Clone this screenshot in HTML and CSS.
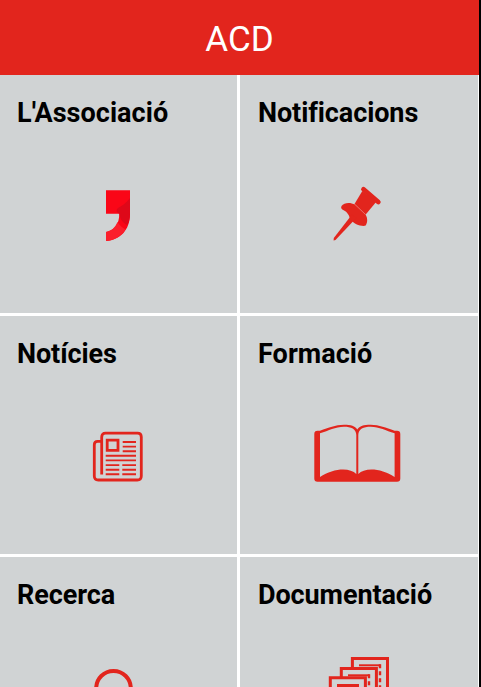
FILE: index.html
```
<!DOCTYPE html>
<html lang="ca">

<head>
    <meta charset="UTF-8" />
    <meta name="viewport" content="width=device-width, initial-scale=1" />
    <title>ACD</title>
    <link rel="stylesheet" href="styles.css">
</head>

<body>
    <div class="app">
        <header class="header">
            <h1>ACD</h1>
        </header>

        <main class="menu">
            <a class="tile">
                <h2 class="wide">L'Associació</h2>
                <svg class="icon" viewBox="0 0 91 76">
                    <path fill="#fa0617" d="M33 10.3H57V34C57 50 47 60 33 61V52C41 50.5 46.3 44.5 46.3 33.7H33Z" />
                    <path fill="#de0819" d="M57 18V34C57 38 56 42 54.5 45C50 43 47 39 46.3 33.7C43 32 43 30 45 28C49 26 53 23 57 18Z" />
                    <path fill="#fb1f2c" d="M44.5 42C47 46 50 48 52.5 49.5C48 56.5 41 60.5 33 61V52C38 51 42 48 44.5 42Z" />
                </svg>
            </a>
            <a class="tile">
                <h2>Notificacions</h2>
                <svg class="icon" viewBox="0 0 91 76">
                    <g fill="#e2251d">
                        <path d="M50.5 9.3L65.3 22" stroke="#e2251d" stroke-width="4.8" stroke-linecap="round" />
                        <path d="M49.3 11L41.5 24L52.5 34.8L63.5 21.5Z" />
                        <path d="M28.5 26C31 22.5 37 22 42 24.5L52.5 34.5C54.8 38 54.8 43 52.3 45.8C47 46.4 41 44 37 39C36 34 33 31 29.3 29.5Q27.3 28 28.5 26Z" />
                        <path d="M39 34.5L43.2 38L22.5 60L20.6 60.5L20.8 58Z" />
                    </g>
                    <path d="M42 24.5L52.5 34.5" stroke="#ee8d87" stroke-width=".6" />
                </svg>
            </a>
            <a class="tile">
                <h2>Notícies</h2>
                <svg class="icon line" viewBox="0 0 91 76">
                    <path stroke-width="2.8" d="M28.7 53.5V16q0-3.8 3.8-3.8H64.5q3.8 0 3.8 3.8V55q0 4-4 4H25.3q-4 0-4-4V23.7q0-3.4 3.4-3.4H28.7M34.2 19.2H45V29.4H34.2Z" />
                    <path stroke-width="1.9" d="M49.7 21H63M49.7 25.6H63M49.7 30.3H63M32.7 34.8H63M32.7 39.4H63M32.7 44.1H46.3M49.3 44.1H63M32.7 48.7H46.3M49.3 48.7H63M32.7 53.3H46.3M49.3 53.3H63" />
                </svg>
            </a>
            <a class="tile">
                <h2 class="wide">Formació</h2>
                <svg class="icon" viewBox="0 0 91 76">
                    <path fill="#e2251d" fill-rule="evenodd" d="M1.3 13Q1.3 9.7 4.5 9.7H7C16 7 22 3.8 31 3.8C38 3.8 42 5 44.3 8.5C46.6 5 50.6 3.8 57.6 3.8C66.6 3.8 72.6 7 81.6 9.7H84Q87.3 9.7 87.3 13V57.5Q87.3 60.7 84 60.7H4.5Q1.3 60.7 1.3 57.5Z
                        M7 12.3V56C20 47 37 46 43.3 53V14C43.3 8 38 5.8 31 5.8C22 6 16 9.7 7 12.3Z
                        M81.6 12.3V56C68.6 47 51.6 46 45.3 53V14C45.3 8 50.6 5.8 57.6 5.8C66.6 6 72.6 9.7 81.6 12.3Z" />
                </svg>
            </a>
            <a class="tile">
                <h2>Recerca</h2>
                <svg class="icon line" viewBox="0 0 91 76">
                    <circle cx="40.5" cy="26.2" r="17.3" stroke-width="4" />
                    <path stroke-width="5" d="M53.5 39L67 53" />
                </svg>
            </a>
            <a class="tile">
                <h2>Documentació</h2>
                <svg class="icon line" viewBox="0 0 91 76">
                    <g stroke-width="3">
                        <path class="sheet" d="M39.4-3.5H74.5V41H39.4Z" />
                        <path stroke-width="2" d="M46 3.3H67.5" />
                        <path stroke-width="2.4" stroke-dasharray="4 3" d="M67 2.3V36" />
                        <path class="sheet" d="M28.3 6.4H63.4V51H28.3Z" />
                        <path stroke-width="2" d="M35 13.3H56.5" />
                        <path stroke-width="2.4" stroke-dasharray="4 3" d="M56 12.3V46" />
                        <path class="sheet" d="M17.3 15.8H52.4V61H17.3Z" />
                        <path d="M24 23.5H46M24 31H46M24 38H46" />
                    </g>
                </svg>
            </a>
        </main>
    </div>
</body>

</html>
```
FILE: styles.css
```
:root {
    --red: #e2251d;
    --tile: #d0d3d4;
    --font: Roboto, 'Liberation Sans', sans-serif;
}

* {
    box-sizing: border-box;
}

html,
body {
    margin: 0;
    height: 100%;
    overflow: hidden;
}

body {
    background-color: #000;
    font-family: var(--font);
}

.app {
    width: 479px;
    height: 687px;
    overflow: hidden;
    background-color: #fff;
}

.header {
    height: 75px;
    background-color: var(--red);
    text-align: center;
}

.header h1 {
    margin: 0;
    padding-top: 2px;
    font-size: 35px;
    font-weight: 400;
    line-height: 75px;
    color: #fff;
}

/* 2 columns of tiles with white separators */
.menu {
    display: grid;
    grid-template-columns: 237px 238px;
    grid-auto-rows: 238px;
    gap: 3px;
}

.tile {
    display: flex;
    flex-direction: column;
    padding-top: 22px;
    background-color: var(--tile);
    color: #000;
}

.tile h2 {
    margin: 0 0 0 17px;
    height: 83px;
    font-size: 27px;
    font-weight: 700;
    line-height: 32px;
    letter-spacing: -0.09px;
    white-space: nowrap;
}

.tile h2.wide {
    letter-spacing: 0.05px;
}

.tile:nth-child(even) h2 {
    margin-left: 18px;
}

.icon {
    width: 91px;
    height: 76px;
    margin-left: 73px;
    overflow: visible;
}

.line {
    fill: none;
    stroke: var(--red);
}

.sheet {
    fill: var(--tile);
}
```
